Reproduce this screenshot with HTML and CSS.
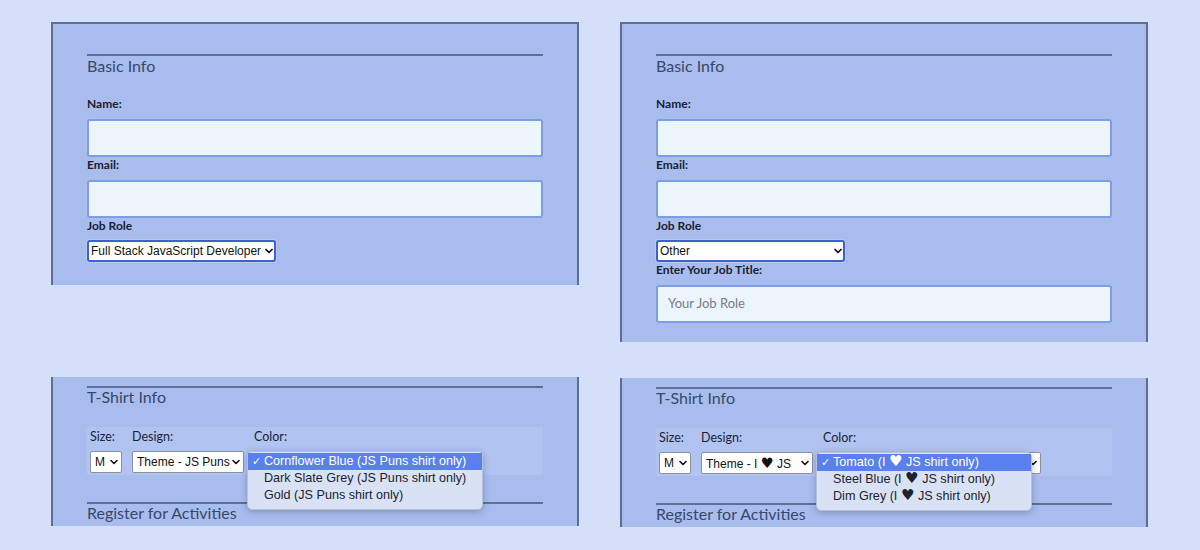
FILE: index.html
```html
<!DOCTYPE html>
<html lang="en">
<head>
<meta charset="utf-8">
<title>Form sections</title>
<link rel="stylesheet" href="styles.css">
</head>
<body>
<div class="page">
  <section class="panel panel-top">
    <h2 class="section-title">Basic Info</h2>
    <label class="label">Name:</label>
    <div class="input"></div>
    <label class="label">Email:</label>
    <div class="input"></div>
    <label class="label label-tight">Job Role</label>
    <div class="select select-focus select-role">
      <span class="select-text">Full Stack JavaScript Developer</span>
      <svg class="chev" width="8" height="6" viewBox="0 0 8 6"><polyline points="1,1.5 4,4.5 7,1.5" fill="none" stroke="#111" stroke-width="1.7" stroke-linecap="round" stroke-linejoin="round"/></svg>
    </div>
  </section>

  <section class="panel panel-top panel-tall">
    <h2 class="section-title">Basic Info</h2>
    <label class="label">Name:</label>
    <div class="input"></div>
    <label class="label">Email:</label>
    <div class="input"></div>
    <label class="label label-tight">Job Role</label>
    <div class="select select-focus select-role">
      <span class="select-text">Other</span>
      <svg class="chev" width="8" height="6" viewBox="0 0 8 6"><polyline points="1,1.5 4,4.5 7,1.5" fill="none" stroke="#111" stroke-width="1.7" stroke-linecap="round" stroke-linejoin="round"/></svg>
    </div>
    <label class="label label-after-select">Enter Your Job Title:</label>
    <div class="input"><span class="placeholder">Your Job Role</span></div>
  </section>

  <section class="panel panel-bottom">
    <h2 class="section-title">T-Shirt Info</h2>
    <div class="shirt-band">
      <div class="shirt-col">
        <span class="small-label">Size:</span>
        <div class="select select-plain select-size">
          <span class="select-text">M</span>
          <svg class="chev" width="8" height="6" viewBox="0 0 8 6"><polyline points="1,1.5 4,4.5 7,1.5" fill="none" stroke="#111" stroke-width="1.6" stroke-linecap="round" stroke-linejoin="round"/></svg>
        </div>
      </div>
      <div class="shirt-col">
        <span class="small-label">Design:</span>
        <div class="select select-plain select-design">
          <span class="select-text">Theme - JS Puns</span>
          <svg class="chev" width="8" height="6" viewBox="0 0 8 6"><polyline points="1,1.5 4,4.5 7,1.5" fill="none" stroke="#111" stroke-width="1.6" stroke-linecap="round" stroke-linejoin="round"/></svg>
        </div>
      </div>
      <div class="shirt-col color-col">
        <span class="small-label">Color:</span>
        <div class="select select-plain select-color-left">
          <span class="select-text"></span>
          <svg class="chev" width="8" height="6" viewBox="0 0 8 6"><polyline points="1,1.5 4,4.5 7,1.5" fill="none" stroke="#111" stroke-width="1.6" stroke-linecap="round" stroke-linejoin="round"/></svg>
        </div>
        <ul class="popup popup-left">
          <li class="opt selected"><span class="check">✓</span>Cornflower Blue (JS Puns shirt only)</li>
          <li class="opt">Dark Slate Grey (JS Puns shirt only)</li>
          <li class="opt">Gold (JS Puns shirt only)</li>
        </ul>
      </div>
    </div>
    <h2 class="section-title section-next">Register for Activities</h2>
  </section>

  <section class="panel panel-bottom panel-bottom-right">
    <h2 class="section-title">T-Shirt Info</h2>
    <div class="shirt-band">
      <div class="shirt-col">
        <span class="small-label">Size:</span>
        <div class="select select-plain select-size">
          <span class="select-text">M</span>
          <svg class="chev" width="8" height="6" viewBox="0 0 8 6"><polyline points="1,1.5 4,4.5 7,1.5" fill="none" stroke="#111" stroke-width="1.6" stroke-linecap="round" stroke-linejoin="round"/></svg>
        </div>
      </div>
      <div class="shirt-col">
        <span class="small-label">Design:</span>
        <div class="select select-plain select-design">
          <span class="select-text">Theme - I <span class="heart">♥</span> JS</span>
          <svg class="chev" width="8" height="6" viewBox="0 0 8 6"><polyline points="1,1.5 4,4.5 7,1.5" fill="none" stroke="#111" stroke-width="1.6" stroke-linecap="round" stroke-linejoin="round"/></svg>
        </div>
      </div>
      <div class="shirt-col color-col">
        <span class="small-label">Color:</span>
        <div class="select select-plain select-color-right">
          <span class="select-text"></span>
          <svg class="chev" width="8" height="6" viewBox="0 0 8 6"><polyline points="1,1.5 4,4.5 7,1.5" fill="none" stroke="#111" stroke-width="1.6" stroke-linecap="round" stroke-linejoin="round"/></svg>
        </div>
        <ul class="popup popup-right">
          <li class="opt selected"><span class="check">✓</span>Tomato (I <span class="heart">♥</span> JS shirt only)</li>
          <li class="opt">Steel Blue (I <span class="heart">♥</span> JS shirt only)</li>
          <li class="opt">Dim Grey (I <span class="heart">♥</span> JS shirt only)</li>
        </ul>
      </div>
    </div>
    <h2 class="section-title section-next">Register for Activities</h2>
  </section>
</div>
</body>
</html>
```

FILE: styles.css
```css
* {
  box-sizing: border-box;
}

html, body {
  margin: 0;
  padding: 0;
}

body {
  background: #d4dff9;
  font-family: Lato, "Noto Sans", sans-serif;
  color: #1c2230;
  width: 1200px;
  height: 550px;
  overflow: hidden;
}

.page {
  display: grid;
  grid-template-columns: 528px 528px;
  column-gap: 41px;
  row-gap: 35px;
  align-items: start;
  padding: 22px 0 0 51px;
}

.panel {
  background: #a8bdee;
  border-left: 2px solid #5c6f97;
  border-right: 2px solid #5c6f97;
  padding: 0 34px;
}

.panel-top {
  border-top: 2px solid #5c6f97;
  padding-top: 30px;
  padding-bottom: 23px;
}

.panel-tall {
  padding-bottom: 19px;
}

.section-title {
  margin: 0 0 20px;
  border-top: 2px solid #5e7096;
  font-size: 16px;
  line-height: 20px;
  font-weight: 400;
  color: #384869;
}

.label {
  display: block;
  font-size: 12px;
  line-height: 16px;
  font-weight: 700;
  color: #1b2130;
  margin-bottom: 7px;
}

.label-tight {
  margin-bottom: 6px;
}

.label-after-select {
  margin-bottom: 7px;
}

.input {
  height: 38px;
  background: #edf5fc;
  border: 2px solid #7f9de3;
  border-radius: 3px;
  display: flex;
  align-items: center;
  padding-left: 10px;
}

.placeholder {
  font-size: 13px;
  color: #767c87;
  margin-top: -2px;
}

.select {
  height: 22px;
  background: #fff;
  display: flex;
  align-items: center;
  justify-content: space-between;
  font-family: "Liberation Sans", Arial, sans-serif;
  font-size: 12px;
  color: #111;
  white-space: nowrap;
  overflow: hidden;
}

.select-text {
  overflow: hidden;
}

.heart {
  font-family: "DejaVu Sans", sans-serif;
  font-size: 1.2em;
  line-height: 1;
}

.select-focus {
  border: 2px solid #3d60d4;
  border-radius: 3px;
  box-shadow: 0 0 0 1px #b9c8f2;
  padding: 0 1px 0 2px;
}

.select-role {
  width: 189px;
}

.chev {
  flex: none;
  margin-left: 1px;
}

.select-plain {
  border: 1px solid #8c919c;
  border-radius: 2px;
  padding: 0 3px 0 4px;
}

.select-size {
  width: 32px;
}

.select-design {
  width: 112px;
}

.select-color-left {
  width: 225px;
}

.select-color-right {
  width: 218px;
}

.panel-bottom {
  height: 149px;
  padding-top: 9px;
}

.panel-bottom .section-title {
  line-height: 18px;
  margin-bottom: 21px;
}

.panel-bottom-right {
  margin-top: 1px;
}

.shirt-band {
  background: #b0c3f1;
  border-radius: 2px;
  padding: 2px 3px;
  display: flex;
  gap: 10px;
}

.shirt-col {
  display: flex;
  flex-direction: column;
  gap: 6px;
}

.color-col {
  position: relative;
}

.small-label {
  font-size: 12.5px;
  line-height: 16px;
  color: #1c2436;
}

.panel-bottom .section-title.section-next {
  margin: 27px 0 0;
}

.popup {
  position: absolute;
  top: 22px;
  left: -7px;
  margin: 0;
  padding: 1px 0 5px;
  list-style: none;
  background: #d9e2f4;
  border: 1px solid #b5c1d8;
  border-radius: 5px;
  box-shadow: 0 2px 7px rgba(30, 40, 70, 0.3);
  font-family: "Liberation Sans", Arial, sans-serif;
  font-size: 12.6px;
  color: #1c2230;
}

.popup-left {
  width: 236px;
}

.popup-right {
  width: 216px;
}

.opt {
  height: 17px;
  line-height: 17px;
  padding-left: 16px;
  position: relative;
  white-space: nowrap;
}

.opt.selected {
  background: #5a80ee;
  color: #fff;
}

.check {
  position: absolute;
  left: 4px;
  top: 0;
  font-size: 11px;
}
```
